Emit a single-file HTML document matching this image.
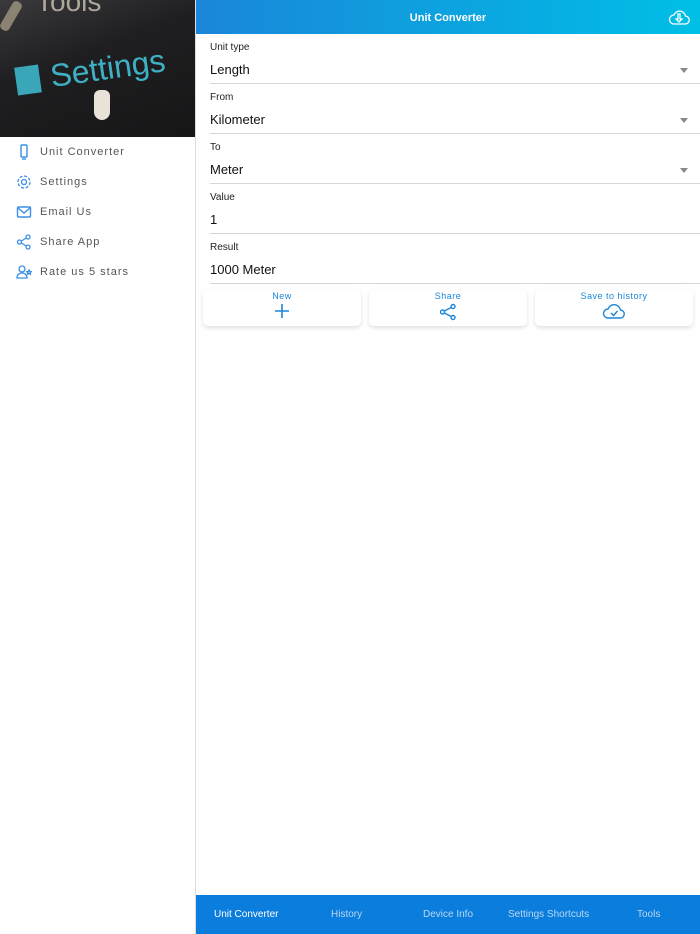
<!DOCTYPE html>
<html><head><meta charset="utf-8"><style>
*{margin:0;padding:0;box-sizing:border-box}
body{width:700px;height:934px;overflow:hidden;font-family:"Liberation Sans",sans-serif;background:#fff;position:relative}
.side{position:absolute;left:0;top:0;width:196px;height:934px;background:#fff;border-right:1px solid #ddd}
.banner{height:137px;background:linear-gradient(160deg,#3a3a3c 0%,#1f1f21 40%,#161617 100%);position:relative;overflow:hidden}
.banner .tools{position:absolute;left:36px;top:-14px;color:#cfc6b4;font-size:28px;opacity:.8}
.banner .wr{position:absolute;left:6px;top:0;width:10px;height:32px;background:#8a8272;transform:rotate(30deg);border-radius:4px}
.banner .set{position:absolute;left:50px;top:50px;color:#3fb0c4;font-size:32px;transform:rotate(-8deg)}
.banner .ic{position:absolute;left:16px;top:66px;width:24px;height:28px;background:#3aa7b9;transform:rotate(-8deg)}
.banner .hand{position:absolute;left:94px;top:90px;width:16px;height:30px;background:#e8e2d8;border-radius:6px 6px 8px 8px}
.menu div{height:30px;display:flex;align-items:center;padding-left:16px;font-size:11px;color:#555;letter-spacing:1px}
.menu svg{width:16px;height:16px;margin-right:8px}
.menu{padding-top:137px;position:absolute;top:0;left:0;width:195px}
.hdr{position:absolute;left:196px;top:0;width:504px;height:34px;background:linear-gradient(90deg,#1a86d9,#00bfe6);color:#fff;font-weight:bold;font-size:11px;text-align:center;line-height:36px}
.row{position:absolute;left:210px;width:490px;height:50px;border-bottom:1px solid #d6d6d6}
.row .l{font-size:10px;color:#222;position:absolute;top:8px}
.row .v{font-size:13px;color:#111;position:absolute;top:28px}
.row .a{position:absolute;right:12px;top:34px;border:4px solid transparent;border-top:5px solid #888;border-bottom:0}
.btn{position:absolute;top:290px;height:36px;background:#fff;border-radius:5px;box-shadow:0 2px 5px rgba(0,0,0,.13);text-align:center;font-size:9px;color:#1a86d9;letter-spacing:.5px;padding-top:1px}
.btn svg{display:block;margin:2px auto 0}
.tab{position:absolute;left:196px;top:895px;width:504px;height:39px;background:#0a7ddd;display:flex;align-items:center;font-size:10px;color:#b9d8f4}
.tab span{position:absolute}
</style></head><body>
<div class="side">
<div class="banner"><div class="wr"></div><div class="tools">Tools</div><div class="ic"></div><div class="set">Settings</div><div class="hand"></div></div>
<div class="menu">
<div><svg viewBox="0 0 16 16" fill="none" stroke="#3a8ee6" stroke-width="1.4"><rect x="5" y="1" width="6" height="12" rx="1"/><path d="M6 15h4"/></svg>Unit Converter</div>
<div><svg viewBox="0 0 16 16" fill="none" stroke="#3a8ee6" stroke-width="1.3"><circle cx="8" cy="8" r="2.5"/><circle cx="8" cy="8" r="6" stroke-dasharray="3 1.7"/></svg>Settings</div>
<div><svg viewBox="0 0 16 16" fill="none" stroke="#3a8ee6" stroke-width="1.4"><rect x="1.5" y="3" width="13" height="10" rx="1"/><path d="M2 4l6 5 6-5"/></svg>Email Us</div>
<div><svg viewBox="0 0 16 16" fill="none" stroke="#3a8ee6" stroke-width="1.3"><circle cx="3.5" cy="8" r="2"/><circle cx="12" cy="3" r="2"/><circle cx="12" cy="13" r="2"/><path d="M5.3 7l5-3M5.3 9l5 3"/></svg>Share App</div>
<div><svg viewBox="0 0 16 16" fill="none" stroke="#3a8ee6" stroke-width="1.3"><circle cx="6" cy="5" r="3"/><path d="M1 14c0-3 2-5 5-5s5 2 5 5z"/><path d="M13 6l.7 1.5 1.5.2-1.1 1 .3 1.5-1.4-.7-1.4.7.3-1.5-1.1-1 1.5-.2z"/></svg>Rate us 5 stars</div>
</div></div>
<div class="hdr">Unit Converter
<svg style="position:absolute;right:10px;top:8px" width="22" height="18" viewBox="0 0 22 18" fill="none" stroke="#fff" stroke-width="1.3"><path d="M6 16h11a4 4 0 0 0 .5-8A6 6 0 0 0 6 7a4.5 4.5 0 0 0 0 9z"/><path d="M10 6v5H8l3 3 3-3h-2V6z"/></svg></div>
<div class="row" style="top:34px"><div class="l">Unit type</div><div class="v">Length</div><div class="a"></div></div>
<div class="row" style="top:84px"><div class="l">From</div><div class="v">Kilometer</div><div class="a"></div></div>
<div class="row" style="top:134px"><div class="l">To</div><div class="v">Meter</div><div class="a"></div></div>
<div class="row" style="top:184px"><div class="l">Value</div><div class="v">1</div></div>
<div class="row" style="top:234px"><div class="l">Result</div><div class="v">1000 Meter</div></div>
<div class="btn" style="left:203px;width:158px">New<svg width="16" height="16" viewBox="0 0 16 16" stroke="#1a86d9" stroke-width="1.6"><path d="M8 1v14M1 8h14"/></svg></div>
<div class="btn" style="left:369px;width:158px">Share<svg width="18" height="18" viewBox="0 0 18 18" fill="none" stroke="#1a86d9" stroke-width="1.4"><circle cx="3.5" cy="9" r="2"/><circle cx="14" cy="3.5" r="2"/><circle cx="14" cy="14.5" r="2"/><path d="M5.3 8l7-3.5M5.3 10l7 3.5"/></svg></div>
<div class="btn" style="left:535px;width:158px">Save to history<svg width="24" height="16" viewBox="0 0 24 16" fill="none" stroke="#1a86d9" stroke-width="1.4"><path d="M6 15h12a4 4 0 0 0 .5-8A6.5 6.5 0 0 0 6 6a4.5 4.5 0 0 0 0 9z"/><path d="M9 10l2.5 2.5L15.5 8"/></svg></div>
<div class="tab">
<span style="left:18px;color:#fff">Unit Converter</span>
<span style="left:135px">History</span>
<span style="left:227px">Device Info</span>
<span style="left:312px">Settings Shortcuts</span>
<span style="left:441px">Tools</span>
</div>
</body></html>
